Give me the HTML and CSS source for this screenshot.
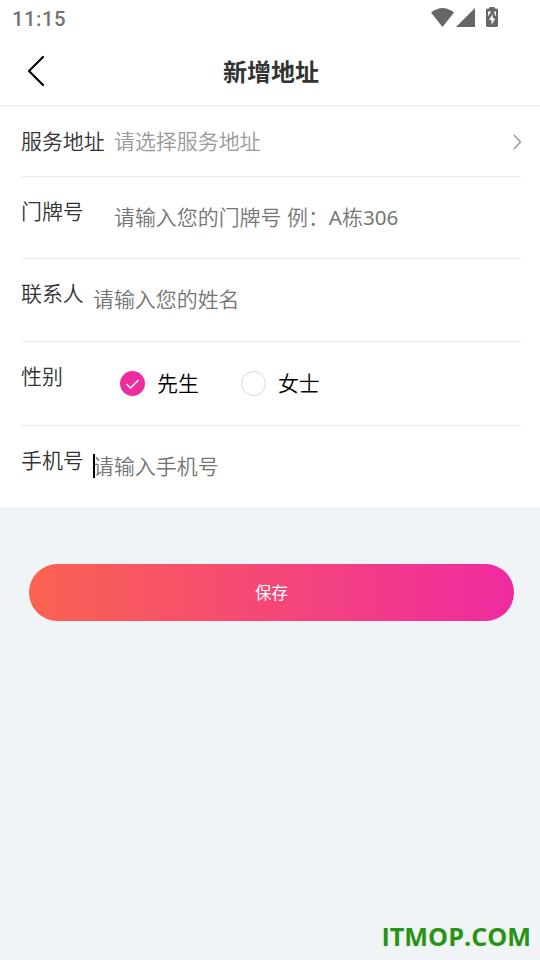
FILE: index.html
```html
<!DOCTYPE html>
<html lang="zh-CN">
<head>
<meta charset="utf-8">
<title>新增地址</title>
<link rel="stylesheet" href="styles.css">
</head>
<body>
<div class="status">
  <span class="clock">11:15</span>
  <svg class="status-icons" width="68" height="22" viewBox="0 0 68 22" fill="#666">
    <path d="M0 4.500Q11.500-4.500 23 4.500L11.500 19Z"/>
    <path d="M25 19 44 0V19Z"/>
    <path d="M58.500-1h5v1.500h2q1.500 0 1.500 1.500v15.500q0 1.500-1.500 1.500h-9q-1.500 0-1.500-1.500V2q0-1.500 1.500-1.500h2z"/>
    <path fill="#fff" d="M61.800 6 58 12h2.500v5L64.200 10.500h-2.400zM57 3.500h3v1l-1 .5-1 2.500h-1zM63 3.500h2v4h-1z"/>
  </svg>
</div>
<header class="header">
  <svg class="back" width="18" height="32" viewBox="0 0 18 32" fill="none" stroke="#000" stroke-width="2.200" stroke-linecap="round" stroke-linejoin="round"><path d="M16 2 2 16 16 30"/></svg>
  <h1 class="title">新增地址</h1>
</header>
<main class="form">
  <div class="row row-address">
    <span class="label">服务地址</span>
    <span class="value muted">请选择服务地址</span>
    <svg class="arrow" width="10" height="16" viewBox="0 0 10 16" fill="none" stroke="#999" stroke-width="1.500"><path d="M2 1 8.500 8 2 15"/></svg>
  </div>
  <div class="row row-door">
    <span class="label">门牌号</span>
    <span class="value">请输入您的门牌号 例：<span class="latin">A</span>栋<span class="latin">306</span></span>
  </div>
  <div class="row row-name">
    <span class="label">联系人</span>
    <span class="value">请输入您的姓名</span>
  </div>
  <div class="row row-gender">
    <span class="label">性别</span>
    <div class="options">
      <span class="option"><svg class="radio" width="25" height="25" viewBox="0 0 25 25" fill="none"><circle cx="12.500" cy="12.500" r="12.500" fill="#ef2ba0"/><path d="M6.500 13 10.500 17 18.500 9" stroke="#fff" stroke-width="1.500"/></svg>先生</span>
      <span class="option"><svg class="radio" width="25" height="25" viewBox="0 0 25 25" fill="none"><circle cx="12.500" cy="12.500" r="12" stroke="#d8d8d8"/></svg>女士</span>
    </div>
  </div>
  <div class="row row-phone">
    <span class="label">手机号</span>
    <span class="value"><i class="caret"></i>请输入手机号</span>
  </div>
</main>
<button class="save">保存</button>
<div class="watermark">ITMOP.COM</div>
</body>
</html>
```
FILE: styles.css
```css
* { box-sizing: border-box; }
body {
  margin: 0;
  height: 960px;
  display: flex;
  flex-direction: column;
  overflow: hidden;
  background: #f0f4f7;
  font-family: "Noto Sans", "Noto Sans CJK SC", sans-serif;
  font-size: 20.95px;
  font-weight: 350;
  line-height: 30px;
  color: #333;
}
.status {
  height: 38px;
  padding: 8px 41px 0 12px;
  display: flex;
  justify-content: space-between;
  background: #fff;
}
.clock {
  font: 500 20.3px/22px Roboto, sans-serif;
  letter-spacing: 0.5px;
  color: #737373;
}
.status-icons { display: block; overflow: visible; }
.header {
  height: 69px;
  padding: 0 27px 2px 27px;
  display: grid;
  grid-template-columns: 18px 1fr 16px;
  align-items: center;
  background: #fff;
  border-bottom: 2px solid #f0f2f5;
}
.title {
  margin: 0;
  padding-top: 2px;
  font-size: 24px;
  font-weight: 700;
  line-height: 34px;
  text-align: center;
}
.form {
  padding: 0 19px 0 21px;
  background: #fff;
}
.row {
  display: flex;
  align-items: flex-start;
  border-bottom: 1px solid #ebebeb;
}
.label { flex: none; padding-top: 19px; white-space: nowrap; }
.value { padding-top: 25px; color: #757575; white-space: nowrap; }
.latin { font-weight: 400; font-size: 20.6px; }
.row-address { height: 70px; }
.row-address .label { width: 93px; }
.row-address .value { padding-top: 19px; }
.row-address .muted { color: #999; }
.arrow { margin: 27px -1px 0 auto; }
.row-door { height: 82px; }
.row-door .label { width: 93px; }
.row-name { height: 83px; }
.row-name .label, .row-phone .label { width: 72px; }
.row-gender { height: 84px; }
.row-gender .label { width: 99px; }
.options { display: flex; gap: 42px; padding-top: 26px; color: #000; }
.option { display: flex; align-items: center; gap: 12px; }
.radio { display: block; }
.row-phone { height: 81px; border-bottom: 0; }
.row-phone .value { position: relative; }
.caret {
  position: absolute;
  left: 0;
  top: 28px;
  width: 2px;
  height: 24px;
  background: #000;
}
.save {
  margin: 57px 26px 0 29px;
  height: 57px;
  padding: 0;
  border: 0;
  border-radius: 29px;
  background: linear-gradient(90deg, #fa6350, #ef2ba0);
  color: #fff;
  font: 16.5px/24px "Noto Sans", "Noto Sans CJK SC", sans-serif;
}
.watermark {
  margin: auto 9px 6px auto;
  font: 700 25.2px/36px "Open Sans", sans-serif;
  color: #279414;
}
```
